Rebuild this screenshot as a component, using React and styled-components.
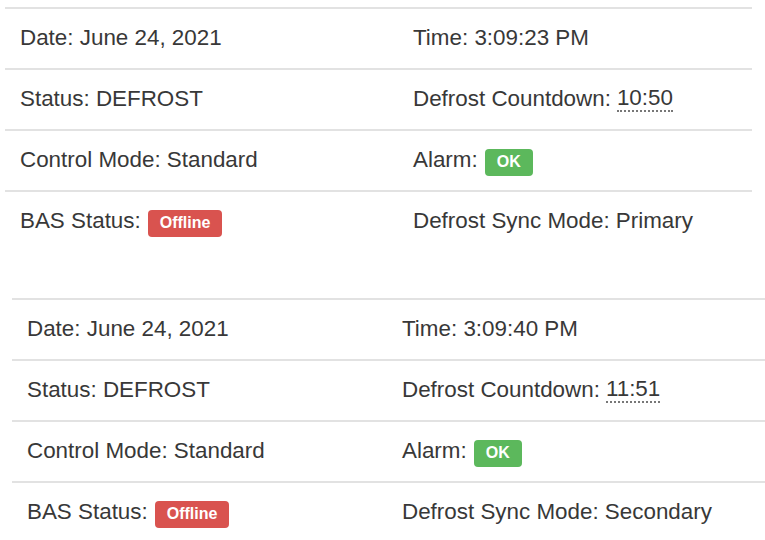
import React from 'react';
import styled, { createGlobalStyle } from 'styled-components';

const GlobalStyle = createGlobalStyle`
  html, body {
    margin: 0;
    padding: 0;
    background: #fff;
  }
  body {
    font-family: 'Liberation Sans', Arial, sans-serif;
    color: #333;
  }
`;

const Page = styled.div`
  display: flex;
  flex-direction: column;
  gap: 47px;
  padding-top: 7px;
  width: 765px;
  overflow: hidden;
`;

const Panel = styled.div`
  margin-left: ${({ offset }) => offset}px;
  width: ${({ width }) => width}px;
  display: flex;
  flex-direction: column;
`;

const Row = styled.div`
  display: grid;
  grid-template-columns: ${({ split }) => split}px 1fr;
  border-top: 2px solid #e2e2e2;
`;

const Cell = styled.div`
  height: 59px;
  padding: 0 15px;
  display: flex;
  align-items: center;
  font-size: 22.4px;
  line-height: 1;
  white-space: nowrap;
  color: #383838;
`;

const Countdown = styled.abbr`
  text-decoration: none;
  border-bottom: 2px dotted #777;
  margin-left: 6px;
  cursor: help;
`;

const Badge = styled.span`
  display: inline-block;
  margin-left: 7px;
  padding: 5px 12px 6px;
  font-size: 16px;
  font-weight: 700;
  line-height: 1;
  color: #fff;
  border-radius: 4px;
  background: ${({ tone }) => (tone === 'danger' ? '#d9534f' : '#5cb85c')};
  position: relative;
  top: 2px;
`;

const panels = [
  {
    offset: 5,
    width: 747,
    split: 393,
    time: '3:09:23 PM',
    countdown: '10:50',
    sync: 'Primary',
  },
  {
    offset: 12,
    width: 760,
    split: 375,
    time: '3:09:40 PM',
    countdown: '11:51',
    sync: 'Secondary',
  },
];

function ControllerPanel({ data }) {
  return (
    <Panel offset={data.offset} width={data.width}>
      <Row split={data.split}>
        <Cell>Date: June 24, 2021</Cell>
        <Cell>Time: {data.time}</Cell>
      </Row>
      <Row split={data.split}>
        <Cell>Status: DEFROST</Cell>
        <Cell>
          Defrost Countdown:
          <Countdown title="Time remaining">{data.countdown}</Countdown>
        </Cell>
      </Row>
      <Row split={data.split}>
        <Cell>Control Mode: Standard</Cell>
        <Cell>
          Alarm:<Badge tone="success">OK</Badge>
        </Cell>
      </Row>
      <Row split={data.split}>
        <Cell>
          BAS Status:<Badge tone="danger">Offline</Badge>
        </Cell>
        <Cell>Defrost Sync Mode: {data.sync}</Cell>
      </Row>
    </Panel>
  );
}

export default function App() {
  return (
    <>
      <GlobalStyle />
      <Page>
        {panels.map((p, i) => (
          <ControllerPanel key={i} data={p} />
        ))}
      </Page>
    </>
  );
}
